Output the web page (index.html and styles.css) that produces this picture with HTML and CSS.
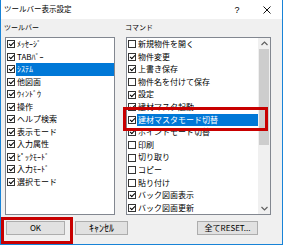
FILE: index.html
```html
<!DOCTYPE html>
<html lang="ja">

<head>
    <meta charset="UTF-8">
    <title>ツールバー表示設定</title>
    <link rel="stylesheet" href="styles.css">
</head>

<body>
    <div class="dialog">
        <div class="titlebar">
            <span class="title">ツールバー表示設定</span>
            <span class="title-btn help">?</span>
            <span class="title-btn close">
                <svg width="8" height="8" viewBox="0 0 8 8">
                    <path d="M0.5 0.5 L7.5 7.5 M7.5 0.5 L0.5 7.5" stroke="#111" stroke-width="1" fill="none" />
                </svg>
            </span>
        </div>

        <div class="columns">
            <div class="col col-left">
                <div class="label">ツールバー</div>
                <ul class="list">
                    <li class="item"><span class="cb on"></span><span class="text">ﾒｯｾｰｼﾞ</span></li>
                    <li class="item"><span class="cb on"></span><span class="text">TABﾊﾞｰ</span></li>
                    <li class="item selected"><span class="cb on"></span><span class="text">ｼｽﾃﾑ</span></li>
                    <li class="item"><span class="cb on"></span><span class="text">他図面</span></li>
                    <li class="item"><span class="cb on"></span><span class="text">ｳｨﾝﾄﾞｳ</span></li>
                    <li class="item"><span class="cb on"></span><span class="text">操作</span></li>
                    <li class="item"><span class="cb on"></span><span class="text">ヘルプ検索</span></li>
                    <li class="item"><span class="cb on"></span><span class="text">表示モード</span></li>
                    <li class="item"><span class="cb on"></span><span class="text">入力属性</span></li>
                    <li class="item"><span class="cb on"></span><span class="text">ﾋﾟｯｸﾓｰﾄﾞ</span></li>
                    <li class="item"><span class="cb on"></span><span class="text">入力ﾓｰﾄﾞ</span></li>
                    <li class="item"><span class="cb on"></span><span class="text">選択モード</span></li>
                </ul>
            </div>

            <div class="col col-right">
                <div class="label">コマンド</div>
                <div class="list list-scroll">
                    <ul class="items">
                        <li class="item"><span class="cb"></span><span class="text">新規物件を開く</span></li>
                        <li class="item"><span class="cb on"></span><span class="text">物件変更</span></li>
                        <li class="item"><span class="cb on"></span><span class="text">上書き保存</span></li>
                        <li class="item"><span class="cb"></span><span class="text">物件名を付けて保存</span></li>
                        <li class="item"><span class="cb on"></span><span class="text">設定</span></li>
                        <li class="item"><span class="cb on"></span><span class="text">建材マスタ起動</span></li>
                        <li class="item selected"><span class="cb on"></span><span class="text">建材マスタモード切替</span></li>
                        <li class="item"><span class="cb on"></span><span class="text">ポイントモード切替</span></li>
                        <li class="item"><span class="cb"></span><span class="text">印刷</span></li>
                        <li class="item"><span class="cb"></span><span class="text">切り取り</span></li>
                        <li class="item"><span class="cb"></span><span class="text">コピー</span></li>
                        <li class="item"><span class="cb"></span><span class="text">貼り付け</span></li>
                        <li class="item"><span class="cb on"></span><span class="text">バック図面表示</span></li>
                        <li class="item"><span class="cb on"></span><span class="text">バック図面更新</span></li>
                    </ul>
                    <div class="scrollbar">
                        <div class="arrow">
                            <svg width="7" height="5" viewBox="0 0 7 5">
                                <path d="M0.5 4 L3.5 1 L6.5 4" stroke="#606060" stroke-width="1.2" fill="none" />
                            </svg>
                        </div>
                        <div class="thumb"></div>
                        <div class="track"></div>
                        <div class="arrow">
                            <svg width="7" height="5" viewBox="0 0 7 5">
                                <path d="M0.5 1 L3.5 4 L6.5 1" stroke="#606060" stroke-width="1.2" fill="none" />
                            </svg>
                        </div>
                    </div>
                </div>
            </div>
        </div>

        <div class="buttons">
            <button class="btn btn-ok">OK</button>
            <button class="btn btn-cancel">ｷｬﾝｾﾙ</button>
            <button class="btn btn-reset">全てRESET...</button>
        </div>

        <!-- 赤枠 -->
        <div class="mark mark-item"></div>
        <div class="mark mark-ok"></div>
    </div>
</body>

</html>
```

FILE: styles.css
```css
* {
    box-sizing: border-box;
}

body {
    margin: 0;
    font-family: "Noto Sans CJK JP", sans-serif;
    font-size: 8px;
    color: #000;
    background-color: #fff;
}

.dialog {
    position: relative;
    width: 283px;
    height: 245px;
    background-color: #f0f0f0;
    border: 1px solid #1883d7;
    border-top: none;
}

.titlebar {
    display: flex;
    align-items: center;
    height: 19px;
    padding-left: 3px;
    background-color: #fff;
}

.title {
    font-size: 7.5px;
    margin-top: -2px;
}

.title-btn {
    display: flex;
    align-items: center;
    justify-content: center;
    width: 30px;
    height: 19px;
}

.help {
    margin-left: auto;
    font-family: "Liberation Sans", sans-serif;
    font-size: 9px;
}

.columns {
    display: flex;
    padding-left: 4px;
}

.col-left {
    width: 110px;
}

.col-right {
    width: 145px;
    margin-left: 11px;
}

.label {
    height: 18px;
    line-height: 16px;
    margin-left: -1px;
    font-size: 7px;
}

.list {
    height: 178px;
    margin: 0;
    padding: 0;
    list-style: none;
    background-color: #fff;
    border: 1px solid #828790;
}

.list-scroll {
    display: flex;
}

.items {
    flex: 1;
    margin: 0;
    padding: 0;
    list-style: none;
}

.item {
    display: flex;
    align-items: center;
    height: 12.5px;
}

.list-scroll .item {
    height: 12.6px;
}

.cb {
    display: flex;
    align-items: center;
    justify-content: center;
    width: 8px;
    height: 8px;
    margin: 0 1px;
    border: 1px solid #333;
    background-color: #fff;
}

.cb.on::after {
    content: '';
    width: 2px;
    height: 4px;
    margin-top: -1px;
    border-right: 1.5px solid #000;
    border-bottom: 1.5px solid #000;
    transform: rotate(45deg);
}

.text {
    flex: 1;
    height: 100%;
    line-height: 12px;
    padding-left: 1px;
    white-space: nowrap;
}

.item.selected .text {
    background-color: #0078d7;
    color: #fff;
}

.scrollbar {
    display: flex;
    flex-direction: column;
    width: 12px;
    background-color: #f0f0f0;
}

.arrow {
    display: flex;
    align-items: center;
    justify-content: center;
    height: 11px;
}

.thumb {
    height: 96px;
    margin: 0 1px;
    background-color: #cdcdcd;
}

.track {
    flex: 1;
}

.buttons {
    display: flex;
    margin-top: 6px;
    padding-left: 5px;
    padding-right: 24px;
}

.btn {
    height: 14px;
    padding: 0;
    font-family: "Noto Sans CJK JP", sans-serif;
    font-size: 8px;
    line-height: 12px;
    color: #000;
    background-color: #e1e1e1;
    border: 1px solid #adadad;
}

.btn-ok {
    width: 59px;
}

.btn-cancel {
    width: 53px;
    margin-left: 10px;
    font-size: 10px;
}

.btn-reset {
    width: 61px;
    margin-left: auto;
}

.mark {
    position: absolute;
    border: 3px solid #c80000;
}

.mark-item {
    left: 122px;
    top: 107px;
    width: 145px;
    height: 24px;
}

.mark-ok {
    left: 0;
    top: 217px;
    width: 72px;
    height: 27px;
}
```
